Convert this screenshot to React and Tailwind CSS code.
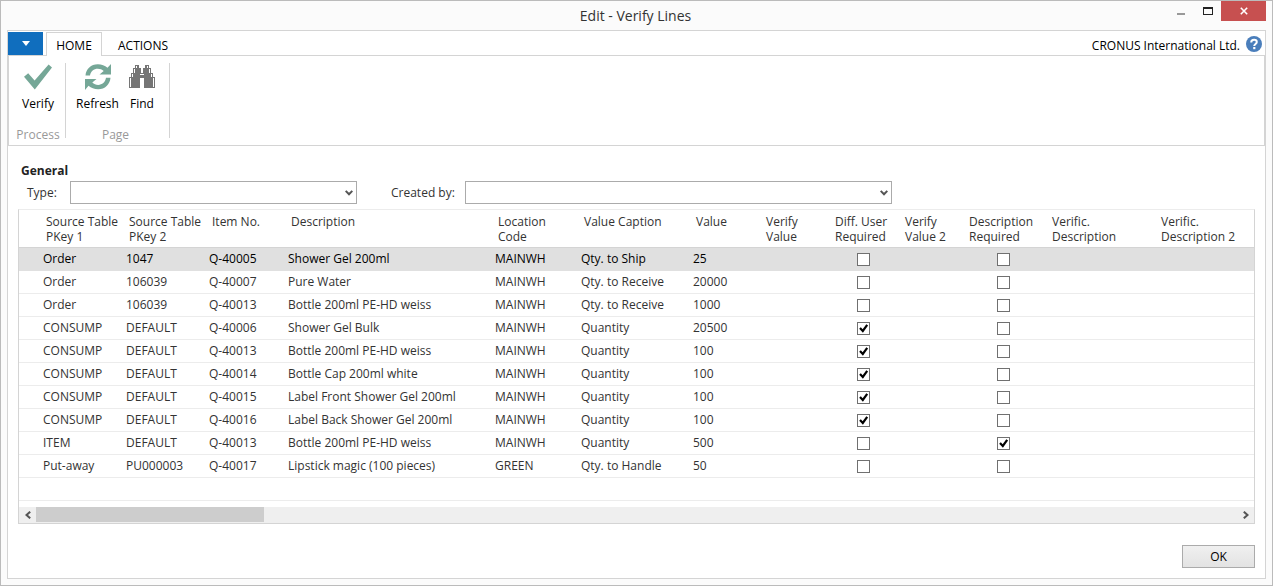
import React from "react";

const COLUMNS = [
  { title: "Source Table\nPKey 1", key: "pkey1", width: "w-[104px]", first: true },
  { title: "Source Table\nPKey 2", key: "pkey2", width: "w-[83px]" },
  { title: "Item No.", key: "item", width: "w-[79px]" },
  { title: "Description", key: "description", width: "w-[207px]" },
  { title: "Location\nCode", key: "location", width: "w-[86px]" },
  { title: "Value Caption", key: "caption", width: "w-[112px]" },
  { title: "Value", key: "value", width: "w-[70px]" },
  { title: "Verify\nValue", key: "verifyValue", width: "w-[69px]" },
  { title: "Diff. User\nRequired", key: "diffUser", width: "w-[70px]", check: true },
  { title: "Verify\nValue 2", key: "verifyValue2", width: "w-[64px]" },
  { title: "Description\nRequired", key: "descRequired", width: "w-[83px]", check: true },
  { title: "Verific.\nDescription", key: "verDesc", width: "w-[109px]" },
  { title: "Verific.\nDescription 2", key: "verDesc2", width: "" },
];

const line = (pkey1, pkey2, item, description, location, caption, value, diffUser = false, descRequired = false) => ({
  pkey1, pkey2, item, description, location, caption, value, diffUser, descRequired,
});

const ROWS = [
  line("Order", "1047", "Q-40005", "Shower Gel 200ml", "MAINWH", "Qty. to Ship", "25"),
  line("Order", "106039", "Q-40007", "Pure Water", "MAINWH", "Qty. to Receive", "20000"),
  line("Order", "106039", "Q-40013", "Bottle 200ml PE-HD weiss", "MAINWH", "Qty. to Receive", "1000"),
  line("CONSUMP", "DEFAULT", "Q-40006", "Shower Gel Bulk", "MAINWH", "Quantity", "20500", true),
  line("CONSUMP", "DEFAULT", "Q-40013", "Bottle 200ml PE-HD weiss", "MAINWH", "Quantity", "100", true),
  line("CONSUMP", "DEFAULT", "Q-40014", "Bottle Cap 200ml white", "MAINWH", "Quantity", "100", true),
  line("CONSUMP", "DEFAULT", "Q-40015", "Label Front Shower Gel 200ml", "MAINWH", "Quantity", "100", true),
  line("CONSUMP", "DEFAULT", "Q-40016", "Label Back Shower Gel 200ml", "MAINWH", "Quantity", "100", true),
  line("ITEM", "DEFAULT", "Q-40013", "Bottle 200ml PE-HD weiss", "MAINWH", "Quantity", "500", false, true),
  line("Put-away", "PU000003", "Q-40017", "Lipstick magic (100 pieces)", "GREEN", "Qty. to Handle", "50"),
];

function TitleBar() {
  return (
    <header className="grid h-[29px] grid-cols-[1fr_auto_1fr] items-center pr-1.5">
      <span />
      <h1 className="pl-1 text-[14px] text-[#333]">Edit - Verify Lines</h1>
      <div className="flex h-full items-start justify-end">
        <button type="button" aria-label="Minimize" className="flex h-5 w-7 items-center justify-center">
          <svg width="8" height="12" viewBox="0 0 8 12"><path d="M0 8h8v2H0z" fill="#999" /></svg>
        </button>
        <button type="button" aria-label="Maximize" className="flex h-5 w-[26px] items-center justify-center">
          <svg width="10" height="8" viewBox="0 0 10 8"><path d="M0 0h10v8H0z M1 2v5h8V2z" fill="#222" fillRule="evenodd" /></svg>
        </button>
        <button type="button" aria-label="Close" className="flex h-5 w-[45px] items-center justify-center bg-[#c75050]">
          <svg width="8" height="8" viewBox="0 0 8 8"><path d="M0.8 0.8 7.2 7.2M7.2 0.8 0.8 7.2" stroke="#fff" strokeWidth="1.6" /></svg>
        </button>
      </div>
    </header>
  );
}

function CheckIcon() {
  return (
    <svg width="28" height="26" viewBox="0 0 28 26">
      <path d="M0 12.800 4.200 9.200 10.600 16.400 24.600 0.400 28 3.600 10.800 25.500z" fill="#75a797" />
    </svg>
  );
}

function RefreshIcon() {
  return (
    <svg width="26" height="26" viewBox="0 0 26 26" fill="#75a797">
      <path d="M0.500 11.500C1 5 6 0.300 12.800 0.300c4 0 7 1.200 9.700 3.500L26 0v10.500H14.500l4.200-3.600C17 5.400 15.200 4.700 12.800 4.700 8.800 4.700 5.700 7.300 5 11.500z" />
      <path d="M25.500 13.800C25 20.500 20 25.300 13.200 25.300c-4 0-7-1.200-9.700-3.500L0 26V15h11.500l-4.200 3.600c1.700 1.500 3.500 2.300 5.900 2.300 4 0 7.100-2.600 7.800-7.100z" />
    </svg>
  );
}

function BinocularsIcon() {
  return (
    <svg width="26" height="24" viewBox="0 0 26 24" fill="#757575">
      <path d="M6 0h4v3h2v5h2V3h2V0h4v3h2v5h2v4h2v11H15V13h-4v10H0V12h2V8h2V3h2z" />
      <path d="M1.500 13v9M3.500 9v3M5.500 4v4M7.500 1v2M24.500 13v9M22.500 9v3M20.500 4v4M18.500 1v2M11 9.500h4" stroke="#fff" strokeWidth="1" />
    </svg>
  );
}

function RibbonButton({ icon, label }) {
  return (
    <button type="button" className="flex flex-col items-center text-black">
      <span className="flex h-7 items-center">{icon}</span>
      <span className="mt-[5px] leading-4">{label}</span>
    </button>
  );
}

function RibbonGroup({ title, children, className }) {
  return (
    <section className={"my-[7px] flex h-[75px] flex-col justify-between border-r border-[#d4d4d4] " + className}>
      <div className="flex justify-center gap-2.5">{children}</div>
      <h2 className="text-center leading-[6px] text-[#999]">{title}</h2>
    </section>
  );
}

function Ribbon() {
  return (
    <div>
      <nav className="flex h-6 items-stretch text-black">
        <button type="button" aria-label="Application menu" className="mt-px flex w-[35px] items-center justify-center bg-[#106ebe]">
          <svg width="8" height="5" viewBox="0 0 8 5"><path d="M0 0h8L4 5z" fill="#fff" /></svg>
        </button>
        <button type="button" className="z-10 -mb-px ml-[3px] mt-px w-14 border border-b-0 border-[#d4d4d4] bg-white pt-0.5">HOME</button>
        <button type="button" className="ml-4 pt-[5px]">ACTIONS</button>
        <span className="ml-auto self-center pt-[5px]">CRONUS International Ltd.</span>
        <button type="button" aria-label="Help" className="ml-1.5 mr-[3px] flex items-center pt-0.5">
          <svg width="16" height="16" viewBox="0 0 16 16">
            <circle cx="8" cy="8" r="8" fill="#4a7ebb" />
            <path d="M5.200 6.400C5.200 4.600 6.300 3.700 8.100 3.700s2.700.9 2.700 2.300c0 1.900-2.600 2-2.600 4" fill="none" stroke="#fff" strokeWidth="2" />
            <path d="M7.200 11h2.200v2.200H7.200z" fill="#fff" />
          </svg>
        </button>
      </nav>
      <div className="flex border border-[#d4d4d4]">
        <RibbonGroup title="Process" className="w-[57px] pl-0.5">
          <RibbonButton icon={<CheckIcon />} label="Verify" />
        </RibbonGroup>
        <RibbonGroup title="Page" className="w-[104px] pr-1">
          <RibbonButton icon={<RefreshIcon />} label="Refresh" />
          <RibbonButton icon={<BinocularsIcon />} label="Find" />
        </RibbonGroup>
      </div>
    </div>
  );
}

function Dropdown({ id, className }) {
  return (
    <div className={"relative " + className}>
      <select id={id} className="block h-[23px] w-full appearance-none border border-[#ababab] bg-white">
        <option value=""></option>
      </select>
      <svg className="pointer-events-none absolute right-1 top-[9px]" width="8" height="6" viewBox="0 0 8 6">
        <path d="M0.700 0.900 4 4.300 7.300 0.900" fill="none" stroke="#555" strokeWidth="2" />
      </svg>
    </div>
  );
}

function GridCheckbox({ checked, label }) {
  return (
    <span className="relative mx-auto block size-[13px]">
      <input type="checkbox" defaultChecked={checked} aria-label={label} className="peer block size-[13px] appearance-none border border-[#707070] bg-white" />
      <svg className="pointer-events-none absolute left-0 top-0 hidden peer-checked:block" width="13" height="13" viewBox="0 0 13 13">
        <path d="M3 6 5.800 9 10.200 2.800" fill="none" stroke="#000" strokeWidth="2.200" />
      </svg>
    </span>
  );
}

function LinesGrid() {
  return (
    <div className="border border-t-[#ececec] border-[#d4d4d4]">
      <table className="w-full table-fixed border-separate border-spacing-0">
        <colgroup>
          {COLUMNS.map((c) => <col key={c.key} className={c.width} />)}
        </colgroup>
        <thead>
          <tr className="h-[38px]">
            {COLUMNS.map((c) => (
              <th key={c.key} className={"whitespace-pre border-b border-[#d4d4d4] pt-1 text-left align-top font-normal leading-[15px] " + (c.first ? "pl-[27px]" : "pl-1.5")}>
                {c.title}
              </th>
            ))}
          </tr>
        </thead>
        <tbody>
          {ROWS.map((row, i) => (
            <tr key={i} className={"h-[23px] " + (i === 0 ? "bg-[#e0e0e0] text-black" : "")}>
              {COLUMNS.map((c) => (
                <td key={c.key} className={"whitespace-nowrap border-b p-0 leading-4 " + (i === 0 ? "border-[#e0e0e0] " : "border-[#ececec] ") + (c.check ? "pr-0.5" : c.first ? "pl-6" : "pl-[3px]")}>
                  {c.check ? <GridCheckbox checked={row[c.key]} label={c.title + ", line " + (i + 1)} /> : row[c.key]}
                </td>
              ))}
            </tr>
          ))}
          <tr className="h-[23px]">
            <td colSpan={COLUMNS.length} className="border-b border-[#ececec] p-0" />
          </tr>
        </tbody>
      </table>
      <div className="mt-1.5 flex h-4 bg-[#efefef]">
        <button type="button" aria-label="Scroll left" className="flex w-[17px] items-center justify-center">
          <svg width="6" height="8" viewBox="0 0 6 8"><path d="M5.200 0.700 1.500 4 5.200 7.300" fill="none" stroke="#555" strokeWidth="2" /></svg>
        </button>
        <div className="flex-1"><div className="h-[15px] w-[19%] bg-[#cdcdcd]" /></div>
        <button type="button" aria-label="Scroll right" className="flex w-[17px] items-center justify-center">
          <svg width="6" height="8" viewBox="0 0 6 8"><path d="M0.800 0.700 4.500 4 0.800 7.300" fill="none" stroke="#555" strokeWidth="2" /></svg>
        </button>
      </div>
    </div>
  );
}

export default function App() {
  return (
    <div className="flex min-h-screen flex-col border border-[#bbb] bg-[#fbfbfb] font-['Open_Sans','Noto_Sans',sans-serif] text-[12px] text-[#333]">
      <TitleBar />
      <div className="mx-1.5 mb-1.5 flex flex-1 flex-col border border-[#d4d4d4] bg-white">
        <Ribbon />
        <main className="flex flex-col px-2.5 pt-[17px]">
          <h2 className="pl-[3px] font-bold leading-4 text-[#222]">General</h2>
          <div className="mb-[5px] mt-0.5 flex items-center pl-[9px]">
            <label htmlFor="type" className="w-[43px]">Type:</label>
            <Dropdown id="type" className="w-[287px]" />
            <label htmlFor="created-by" className="ml-[34px] w-[74px]">Created by:</label>
            <Dropdown id="created-by" className="w-[427px]" />
          </div>
          <LinesGrid />
          <button type="button" className="mb-2.5 mt-[21px] h-[23px] w-[73px] self-end border border-[#ababab] bg-linear-to-b from-[#f0f0f0] to-[#e3e3e3] text-black">OK</button>
        </main>
      </div>
    </div>
  );
}
